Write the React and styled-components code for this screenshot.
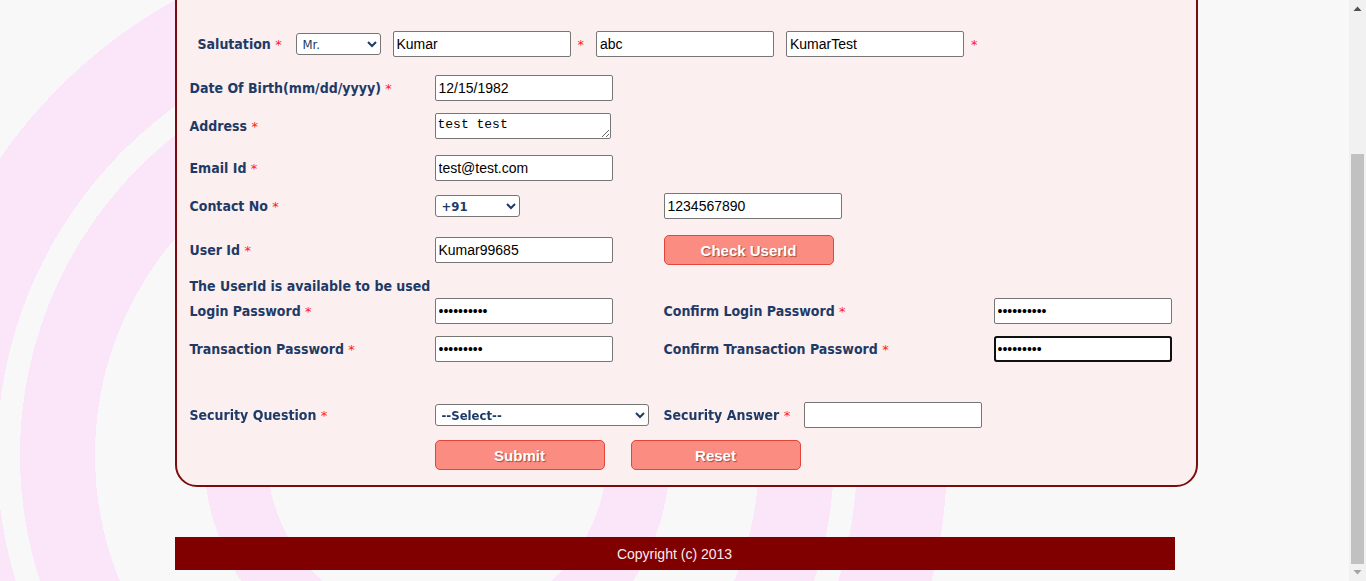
import React, { useLayoutEffect, useRef, useState } from "react";
import styled, { createGlobalStyle } from "styled-components";

const Global = createGlobalStyle`
  html, body { margin: 0; padding: 0; height: 100%; overflow: hidden; }
  body { font-family: "Liberation Sans", Arial, sans-serif; }
`;

const ring = "#fbe6f9";
const paper = "#f8f8f8";

const Frame = styled.div`
  display: flex;
  height: 100vh;
`;

const Viewport = styled.div`
  flex: 1;
  min-width: 0;
  overflow: hidden;
  background-color: ${paper};
  background-image:
    radial-gradient(circle at 437px 455px,
      transparent 170px, ${ring} 170px, ${ring} 233px, transparent 233px),
    radial-gradient(circle at 427px 455px,
      transparent 332px, ${ring} 332px, ${ring} 407px,
      transparent 407px, transparent 430px,
      ${ring} 430px, ${ring} 520px, transparent 520px);
  background-repeat: no-repeat;
`;

const ScrollBar = styled.div`
  width: 17px;
  flex: none;
  background: #f1f1f1;
  display: flex;
  flex-direction: column;
`;

const ScrollBtn = styled.div`
  height: 17px;
  flex: none;
  display: flex;
  align-items: center;
  justify-content: center;
  color: ${(p) => (p.$dim ? "#a3a3a3" : "#505050")};
`;

const Track = styled.div`
  flex: 1;
  display: flex;
  flex-direction: column;
  padding: 0 2px;
`;

const Thumb = styled.div`
  background: #c1c1c1;
  flex: none;
`;

const Wrapper = styled.div`
  width: 1000px;
  margin: 0 auto;
  padding: 140px 0 11px;
`;

const Card = styled.section`
  box-sizing: border-box;
  width: 1023px;
  background: #fcefef;
  border: 2px solid #7b0c0c;
  border-radius: 22px;
  padding: 82px 0 15px 13px;
`;

const SaluteRow = styled.div`
  height: 30px;
  display: flex;
  align-items: center;
  padding-left: 8px;
`;

const Label = styled.span`
  font-family: "DejaVu Sans Condensed", "DejaVu Sans", sans-serif;
  font-weight: bold;
  font-size: 14px;
  color: #1e3a66;
  white-space: nowrap;
  ${(p) => (p.$span ? "grid-column: 1 / -1;" : "")}
  ${(p) => (p.$w ? `width: ${p.$w}px; flex: none;` : "")}
`;

const Req = styled.span`
  color: #ff1a1a;
  font-weight: normal;
  font-family: "DejaVu Sans", sans-serif;
  font-size: 13px;
  margin: ${(p) => p.$m || "0"};
`;

const Row = styled.div`
  display: grid;
  grid-template-columns: 245px 229px 330px 1fr;
  align-items: center;
  height: ${(p) => p.$h || 30}px;
  margin-top: ${(p) => p.$mt || 0}px;
`;

const Input = styled.input`
  box-sizing: border-box;
  width: 178px;
  height: 26px;
  border: 1px solid #767676;
  border-radius: 2px;
  background: #fff;
  padding: 1px 3px;
  font: 14px "Liberation Sans", Arial, sans-serif;
  color: #000;
  margin: ${(p) => p.$m || "0"};
  &:focus {
    outline: 2px solid #101010;
    outline-offset: -2px;
    border-radius: 3px;
  }
`;

const Area = styled.textarea`
  box-sizing: border-box;
  width: 176px;
  height: 26px;
  border: 1px solid #767676;
  border-radius: 2px;
  padding: 3px 2px 1px;
  font: 13px "Liberation Mono", "DejaVu Sans Mono", monospace;
  color: #000;
  resize: both;
  overflow: hidden;
`;

const Select = styled.select`
  box-sizing: border-box;
  width: ${(p) => p.$w}px;
  height: 22px;
  border: 1px solid #767676;
  border-radius: 3px;
  background: #fff;
  font-family: "DejaVu Sans Condensed", "DejaVu Sans", sans-serif;
  font-size: 13px;
  font-weight: ${(p) => (p.$bold ? "bold" : "normal")};
  color: #1e3a66;
  padding: 0 2px;
  margin: ${(p) => p.$m || "0"};
`;

const Button = styled.button`
  box-sizing: border-box;
  width: 170px;
  height: 30px;
  background: #fa8c82;
  border: 1px solid #e2453c;
  border-radius: 5px;
  color: #fff;
  font: bold 15px "Liberation Sans", Arial, sans-serif;
  text-shadow: 1px 1px 1px rgba(90, 20, 10, 0.55);
  padding: 0;
  cursor: pointer;
`;

const Inline = styled.div`
  display: flex;
  align-items: center;
  ${(p) => (p.$span ? `grid-column: ${p.$span};` : "")}
  gap: ${(p) => p.$gap || 0}px;
`;

const Footer = styled.footer`
  margin-top: 50px;
  height: 33px;
  background: #800000;
  color: #fde9ee;
  font: 14px "Liberation Sans", Arial, sans-serif;
  display: flex;
  align-items: center;
  justify-content: center;
`;

const Arrow = ({ up }) => (
  <svg width="9" height="5" viewBox="0 0 9 5" aria-hidden="true">
    <path d={up ? "M0.5 5 L4.5 0.5 L8.5 5 Z" : "M0.5 0 L4.5 4.5 L8.5 0 Z"} fill="currentColor" />
  </svg>
);

export default function App() {
  const view = useRef(null);
  const focusRef = useRef(null);
  const [thumb, setThumb] = useState({ top: 0, size: 1 });

  useLayoutEffect(() => {
    const f = focusRef.current;
    if (f) {
      f.focus({ preventScroll: true });
      const n = f.value.length;
      try { f.setSelectionRange(n, n); } catch (e) {}
    }
    const v = view.current;
    if (v) {
      v.scrollTop = v.scrollHeight;
      const track = v.clientHeight - 34;
      setThumb({
        top: (track * v.scrollTop) / v.scrollHeight,
        size: (track * v.clientHeight) / v.scrollHeight,
      });
    }
  }, []);

  return (
    <>
      <Global />
      <Frame>
        <Viewport ref={view}>
          <Wrapper>
            <Card>
              <SaluteRow>
                <Label $w={98}>
                  Salutation <Req>*</Req>
                </Label>
                <Select $w={85} defaultValue="Mr.">
                  <option>Mr.</option>
                  <option>Mrs.</option>
                  <option>Ms.</option>
                </Select>
                <Input $m="0 0 0 12px" defaultValue="Kumar" />
                <Req $m="0 12px 0 7px">*</Req>
                <Input defaultValue="abc" />
                <Input $m="0 0 0 12px" defaultValue="KumarTest" />
                <Req $m="0 0 0 7px">*</Req>
              </SaluteRow>

              <Row $mt={14}>
                <Label>
                  Date Of Birth(mm/dd/yyyy) <Req>*</Req>
                </Label>
                <Input defaultValue="12/15/1982" />
              </Row>

              <Row $mt={8}>
                <Label>
                  Address <Req>*</Req>
                </Label>
                <Area defaultValue="test test" />
              </Row>

              <Row $mt={12}>
                <Label>
                  Email Id <Req>*</Req>
                </Label>
                <Input defaultValue="test@test.com" />
              </Row>

              <Row $mt={8}>
                <Label>
                  Contact No <Req>*</Req>
                </Label>
                <Select $w={85} $bold defaultValue="+91">
                  <option>+91</option>
                  <option>+1</option>
                </Select>
                <Input defaultValue="1234567890" />
              </Row>

              <Row $mt={14}>
                <Label>
                  User Id <Req>*</Req>
                </Label>
                <Input defaultValue="Kumar99685" />
                <Button type="button">Check UserId</Button>
              </Row>

              <Row $mt={13} $h={14}>
                <Label $span>The UserId is available to be used</Label>
              </Row>

              <Row $mt={4}>
                <Label>
                  Login Password <Req>*</Req>
                </Label>
                <Input type="password" defaultValue="abcdefghij" />
                <Label>
                  Confirm Login Password <Req>*</Req>
                </Label>
                <Input type="password" defaultValue="abcdefghij" />
              </Row>

              <Row $mt={8}>
                <Label>
                  Transaction Password <Req>*</Req>
                </Label>
                <Input type="password" defaultValue="abcdefghi" />
                <Label>
                  Confirm Transaction Password <Req>*</Req>
                </Label>
                <Input ref={focusRef} type="password" defaultValue="abcdefghi" />
              </Row>

              <Row $mt={36}>
                <Label>
                  Security Question <Req>*</Req>
                </Label>
                <Select $w={214} $bold defaultValue="--Select--">
                  <option>--Select--</option>
                  <option>What is your pet's name?</option>
                </Select>
                <Inline>
                  <Label $w={140}>
                    Security Answer <Req>*</Req>
                  </Label>
                  <Input />
                </Inline>
              </Row>

              <Row $mt={10}>
                <span />
                <Inline $span="2 / 4" $gap={26}>
                  <Button type="button">Submit</Button>
                  <Button type="button">Reset</Button>
                </Inline>
              </Row>
            </Card>
            <Footer>Copyright (c) 2013</Footer>
          </Wrapper>
        </Viewport>
        <ScrollBar>
          <ScrollBtn>
            <Arrow up />
          </ScrollBtn>
          <Track>
            <Thumb style={{ marginTop: thumb.top, height: thumb.size }} />
          </Track>
          <ScrollBtn $dim>
            <Arrow />
          </ScrollBtn>
        </ScrollBar>
      </Frame>
    </>
  );
}
